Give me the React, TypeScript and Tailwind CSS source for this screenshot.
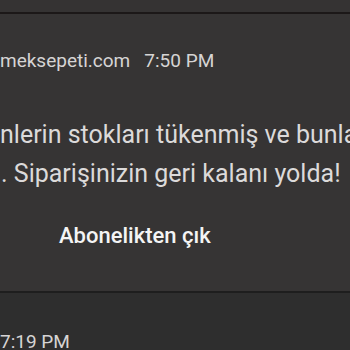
export default function App() {
  return (
    <div
      className="flex h-[350px] w-[350px] flex-col overflow-hidden bg-[#343232] text-[#d6d4d4]"
      style={{ fontFamily: "Roboto, 'Noto Sans', sans-serif" }}
    >
      <div className="h-[12px] shrink-0 bg-[#353333]" />
      <div className="h-[2px] shrink-0 bg-[#1c1818]" />
      <div className="flex h-[277px] shrink-0 flex-col bg-[#363434]">
        <div className="mt-[37px] flex whitespace-nowrap text-[19px] leading-[20px]">
          <span>meksepeti.com</span>
          <span className="ml-[14px]">7:50 PM</span>
        </div>
        <div className="mt-[44px] whitespace-nowrap text-[25px] leading-[39px] text-[#dcdada]">
          <div>nlerin stokları tükenmiş ve bunlar</div>
          <div className="ml-[1px]">. Siparişinizin geri kalanı yolda!</div>
        </div>
        <div className="ml-[59px] mt-[31px] whitespace-nowrap text-[22px] font-medium leading-[24px] text-[#f4f4f4]">
          Abonelikten çık
        </div>
      </div>
      <div className="h-[2px] shrink-0 bg-[#1e1e1e]" />
      <div className="flex flex-1 flex-col bg-[#2e2e2e]">
        <div className="mt-[39px] whitespace-nowrap text-[19px] leading-[20px]">
          7:19 PM
        </div>
      </div>
    </div>
  );
}
